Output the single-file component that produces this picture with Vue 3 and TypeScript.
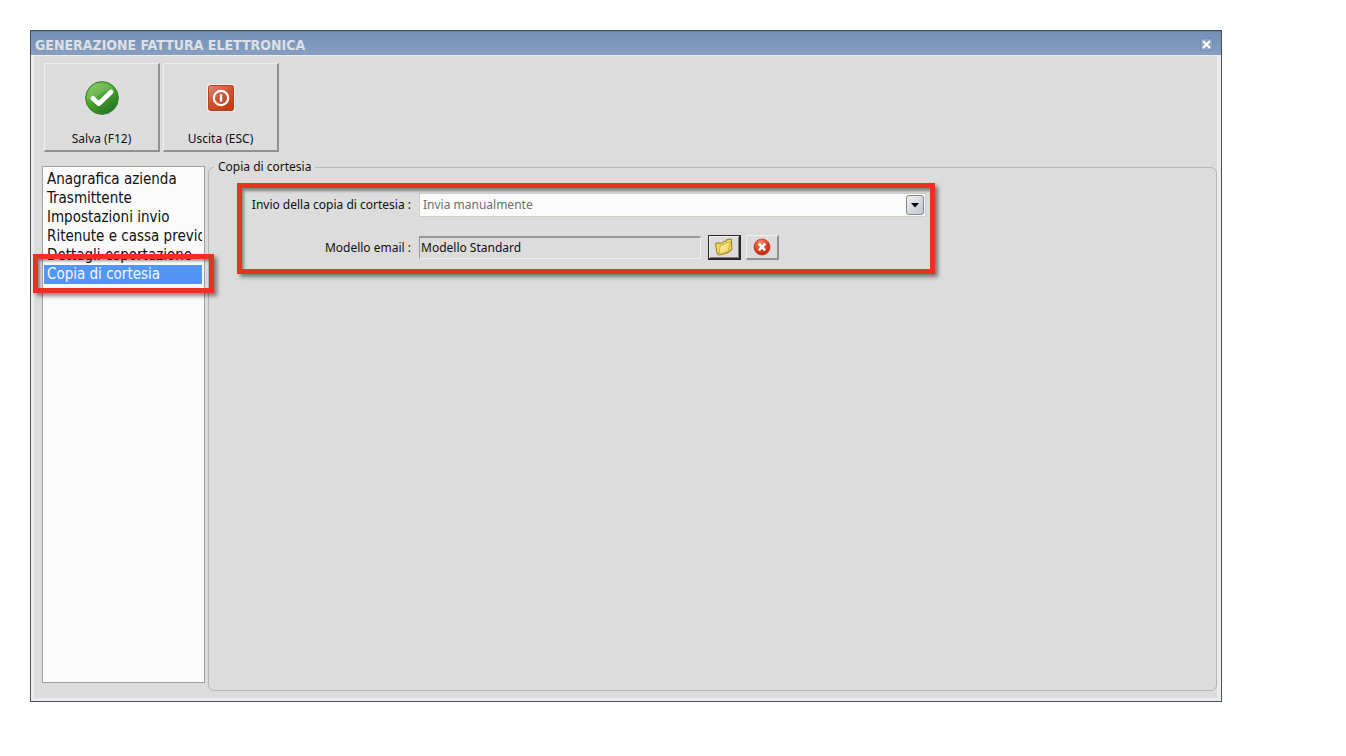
<script setup lang="ts">
import { ref } from 'vue'

const sections: string[] = [
  'Anagrafica azienda',
  'Trasmittente',
  'Impostazioni invio',
  'Ritenute e cassa previdenziale',
  'Dettagli esportazione',
  'Copia di cortesia',
]
const active = ref(5)
const sendMode = ref('Invia manualmente')
const template = ref('Modello Standard')
</script>

<template>
  <div class="page">
    <section class="window">
      <header class="titlebar">
        <h1>GENERAZIONE FATTURA ELETTRONICA</h1>
        <button type="button" class="close" aria-label="Chiudi">
          <svg width="9" height="9" viewBox="0 0 9 9"><path d="M1 1 L8 8 M8 1 L1 8" stroke="#fff" stroke-width="2.2" /></svg>
        </button>
      </header>

      <div class="body">
        <div class="toolbar">
          <button type="button" class="tool">
            <svg width="36" height="36" viewBox="0 0 36 36">
              <defs>
                <linearGradient id="green" x1="0.15" y1="0" x2="0.8" y2="1">
                  <stop offset="0" stop-color="#83cb54" />
                  <stop offset="0.5" stop-color="#45a02c" />
                  <stop offset="1" stop-color="#216b24" />
                </linearGradient>
              </defs>
              <circle cx="18" cy="18" r="16.4" fill="url(#green)" stroke="#348339" stroke-width="1" />
              <path d="M3 19 A15 15 0 0 1 31 11 Q20 10 14 16 Q9 20 3 19 Z" fill="#fff" opacity="0.12" />
              <path d="M9.5 18.5 L15 24 L27.5 12" fill="none" stroke="#246f26" stroke-width="5.2" opacity="0.45" />
              <path d="M9 18.4 L14.8 23.8 L27 12" fill="none" stroke="#fff" stroke-width="4.8" stroke-linejoin="round" stroke-linecap="round" />
            </svg>
            <span>Salva (F12)</span>
          </button>
          <button type="button" class="tool">
            <svg width="36" height="36" viewBox="0 0 36 36">
              <defs>
                <linearGradient id="red" x1="0" y1="0" x2="0.7" y2="1">
                  <stop offset="0" stop-color="#dc8a74" />
                  <stop offset="0.5" stop-color="#cf5535" />
                  <stop offset="1" stop-color="#c83c12" />
                </linearGradient>
              </defs>
              <rect x="4" y="4" width="28" height="28" rx="3" fill="#f6efed" />
              <rect x="5.5" y="5.5" width="25" height="25" rx="2" fill="url(#red)" stroke="#b9401f" stroke-width="1" />
              <circle cx="18" cy="18" r="7.2" fill="none" stroke="#fff" stroke-width="2.2" />
              <path d="M18 14.3 V21.7" stroke="#fff" stroke-width="2.4" />
            </svg>
            <span>Uscita (ESC)</span>
          </button>
        </div>

        <div class="content">
          <nav class="sidebar">
            <ul class="list">
              <li v-for="(name, i) in sections" :key="name">
                <button type="button" class="item" :class="{ selected: i === active }" @click="active = i">{{ name }}</button>
              </li>
            </ul>
            <div class="marker"></div>
          </nav>

          <fieldset class="group">
            <legend>Copia di cortesia</legend>
            <div class="form">
              <label for="mode">Invio della copia di cortesia :</label>
              <div class="combo">
                <select id="mode" v-model="sendMode">
                  <option>Invia manualmente</option>
                </select>
                <span class="arrow">
                  <svg width="8" height="5" viewBox="0 0 8 5"><path d="M0 0 H8 L4 4.6 Z" fill="#000" /></svg>
                </span>
              </div>

              <label for="template">Modello email :</label>
              <div class="picker">
                <input id="template" v-model="template" type="text" readonly />
                <button type="button" class="small focused" aria-label="Apri modello">
                  <svg width="20" height="18" viewBox="0 0 20 18">
                    <defs>
                      <linearGradient id="folder" x1="0" y1="0" x2="1" y2="1">
                        <stop offset="0" stop-color="#fffbc4" />
                        <stop offset="1" stop-color="#eccc3e" />
                      </linearGradient>
                    </defs>
                    <path d="M1.6 5.6 L4.6 4.8 L5.4 5.4 L8.6 4.8 L10 3.4 L12 3.2 L13 1.6 L17.4 1 L17.8 11.5 L14 14.6 L5 17 L3 15 Z" fill="#f0d965" stroke="#a98422" stroke-width="1.1" stroke-linejoin="round" />
                    <path d="M6.2 7.6 L10.4 6.6 L11.6 4.9 L16.4 4.2 L14 13.8 L5 16.4 Z" fill="url(#folder)" stroke="#c5a136" stroke-width="0.8" stroke-linejoin="round" />
                  </svg>
                </button>
                <button type="button" class="small" aria-label="Rimuovi modello">
                  <svg width="18" height="18" viewBox="0 0 18 18">
                    <defs>
                      <radialGradient id="ball" cx="0.4" cy="0.25" r="0.8">
                        <stop offset="0" stop-color="#f58c72" />
                        <stop offset="0.55" stop-color="#e0401f" />
                        <stop offset="1" stop-color="#b8260e" />
                      </radialGradient>
                    </defs>
                    <circle cx="9" cy="9" r="8" fill="url(#ball)" stroke="#b9442c" stroke-width="0.8" />
                    <path d="M5.8 5.6 L12.2 12.4 M12.2 5.6 L5.8 12.4" stroke="#fff" stroke-width="2.6" />
                  </svg>
                </button>
              </div>
            </div>
          </fieldset>
        </div>
      </div>
    </section>
  </div>
</template>

<style>
body {
  margin: 0;
  background: #fff;
}
</style>

<style scoped>
* {
  box-sizing: border-box;
}

.page {
  display: flex;
  min-height: 100vh;
  padding: 30px 124px 54px 30px;
  font-family: "Noto Sans", "DejaVu Sans", sans-serif;
  font-size: 12px;
  line-height: 14px;
  color: #111;
}

button,
input,
select {
  font: inherit;
  color: inherit;
  margin: 0;
}

.window {
  flex: 1;
  min-width: 0;
  display: flex;
  flex-direction: column;
  border: 1px solid #47525f;
  background: #dcdcdc;
}

.titlebar {
  display: flex;
  align-items: center;
  justify-content: space-between;
  height: 24px;
  padding: 2px 8px 0 4px;
  background: linear-gradient(#7490b7, #879fc0);
  border-top: 1px solid #6480a3;
}

h1 {
  margin: 0;
  font-family: "DejaVu Sans Condensed", "DejaVu Sans", sans-serif;
  font-size: 14px;
  line-height: 16px;
  font-weight: bold;
  color: #dde1e6;
}

.close {
  display: flex;
  align-items: center;
  justify-content: center;
  width: 13px;
  height: 13px;
  padding: 0;
  border: 1px solid #6f8cb3;
  border-radius: 2px;
  background: #8ba4c5;
}

.body {
  flex: 1;
  display: flex;
  flex-direction: column;
  padding: 7px 0 7px 8px;
  border: 3px solid #ebebeb;
  border-top-width: 1px;
  border-right-width: 4px;
}

.toolbar {
  display: flex;
  gap: 3px;
  padding-left: 2px;
}

.tool {
  display: flex;
  flex-direction: column;
  align-items: center;
  justify-content: space-between;
  width: 116px;
  height: 89px;
  padding: 16px 0 4px;
  border: 1px solid #eeeeee;
  border-right: 2px solid #929292;
  border-bottom: 2px solid #929292;
  background: #dcdcdc;
}

.content {
  flex: 1;
  display: grid;
  grid-template-columns: 163px minmax(0, 1fr);
  column-gap: 3px;
  margin-top: 8px;
}

.sidebar {
  position: relative;
  margin: 6px 0 8px;
}

.list {
  height: 100%;
  margin: 0;
  padding: 3px 2px 3px 1px;
  list-style: none;
  overflow: hidden;
  background: #fafafa;
  border: 1px solid #a0a0a0;
}

.item {
  display: block;
  width: 100%;
  height: 19px;
  padding: 0 0 0 3px;
  border: 0;
  background: none;
  font-family: "DejaVu Sans Condensed", "DejaVu Sans", sans-serif;
  font-size: 15px;
  line-height: 19px;
  text-align: left;
  white-space: nowrap;
  overflow: hidden;
}

.item.selected {
  background: #5496f8;
  color: #f4f8ff;
}

.marker {
  position: absolute;
  top: 88px;
  left: -9px;
  right: -9px;
  height: 39px;
  border: 5px solid #e83323;
  box-shadow: 3px 3px 4px rgba(0, 0, 0, 0.45), inset 2px 2px 3px rgba(0, 0, 0, 0.4);
  pointer-events: none;
}

.group {
  min-width: 0;
  margin: 0;
  padding: 9px 5px;
  border: 1px solid #b6b6b6;
  border-radius: 6px;
}

legend {
  padding: 0 4px;
}

.form {
  display: grid;
  grid-template-columns: 169px minmax(0, 1fr);
  align-items: center;
  gap: 18px 8px;
  max-width: 698px;
  margin-left: 23px;
  padding: 5px 4px 9px 0;
  border: 5px solid #e83323;
  box-shadow: 3px 3px 4px rgba(0, 0, 0, 0.45), inset 2px 3px 3px rgba(0, 0, 0, 0.4);
}

label {
  text-align: right;
}

.combo {
  position: relative;
}

select {
  display: block;
  width: 100%;
  height: 24px;
  padding: 0 24px 0 3px;
  appearance: none;
  border: 1px solid #cfcfc4;
  border-radius: 0;
  background: #fafafa;
  color: #6f6f6f;
}

.arrow {
  position: absolute;
  top: 2px;
  right: 2px;
  display: flex;
  align-items: center;
  justify-content: center;
  width: 18px;
  height: 20px;
  border: 1px solid #85878f;
  border-radius: 3px;
  background: linear-gradient(135deg, #f0f1f5, #c3c5cf);
  pointer-events: none;
}

.picker {
  display: flex;
  align-items: center;
  gap: 5px;
}

input {
  width: 282px;
  height: 23px;
  margin-right: 2px;
  padding: 0 0 2px 1px;
  border: 1px solid #f0f0f0;
  border-top: 2px solid #989898;
  border-left: 1px solid #989898;
  border-radius: 0;
  background: #dcdcdc;
}

.small {
  display: flex;
  align-items: center;
  justify-content: center;
  width: 33px;
  height: 25px;
  padding: 0;
  border: 1px solid #f0f0f0;
  border-right: 2px solid #929292;
  border-bottom: 2px solid #929292;
  background: #dcdcdc;
}

.small.focused {
  border: 2px solid #2c2426;
  border-top-width: 1px;
  border-left-width: 1px;
  box-shadow: inset 1px 1px 0 #f0f0f0, inset -1px -1px 0 #808080;
}
</style>
